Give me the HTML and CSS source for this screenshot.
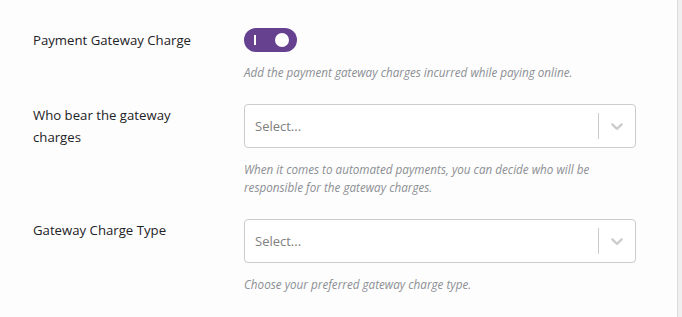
FILE: index.html
```html
<!DOCTYPE html>
<html lang="en">
<head>
<meta charset="utf-8">
<title>Gateway charges</title>
<link rel="stylesheet" href="styles.css">
</head>
<body>
<div class="page">
  <main class="settings">
    <div class="row">
      <div class="label label-toggle">Payment Gateway Charge</div>
      <div class="field">
        <div class="toggle"><span class="toggle-bar"></span><span class="toggle-knob"></span></div>
        <p class="desc desc-toggle">Add the payment gateway charges incurred while paying online.</p>
      </div>
    </div>
    <div class="row">
      <div class="label">Who bear the gateway charges</div>
      <div class="field">
        <div class="select">
          <span class="select-value">Select...</span>
          <span class="select-sep"></span>
          <span class="select-ind"><svg width="20" height="20" viewBox="0 0 20 20"><path d="M4.516 7.548c0.436-0.446 1.043-0.481 1.576 0l3.908 3.747 3.908-3.747c0.533-0.481 1.141-0.446 1.574 0 0.436 0.445 0.408 1.197 0 1.615-0.406 0.418-4.695 4.502-4.695 4.502-0.217 0.223-0.502 0.335-0.787 0.335s-0.57-0.112-0.789-0.335c0 0-4.287-4.084-4.695-4.502s-0.436-1.17 0-1.615z"/></svg></span>
        </div>
        <p class="desc">When it comes to automated payments, you can decide who will be responsible for the gateway charges.</p>
      </div>
    </div>
    <div class="row">
      <div class="label">Gateway Charge Type</div>
      <div class="field">
        <div class="select">
          <span class="select-value">Select...</span>
          <span class="select-sep"></span>
          <span class="select-ind"><svg width="20" height="20" viewBox="0 0 20 20"><path d="M4.516 7.548c0.436-0.446 1.043-0.481 1.576 0l3.908 3.747 3.908-3.747c0.533-0.481 1.141-0.446 1.574 0 0.436 0.445 0.408 1.197 0 1.615-0.406 0.418-4.695 4.502-4.695 4.502-0.217 0.223-0.502 0.335-0.787 0.335s-0.57-0.112-0.789-0.335c0 0-4.287-4.084-4.695-4.502s-0.436-1.17 0-1.615z"/></svg></span>
        </div>
        <p class="desc">Choose your preferred gateway charge type.</p>
      </div>
    </div>
  </main>
  <div class="edge"></div>
</div>
</body>
</html>
```
FILE: styles.css
```css
html, body {
  margin: 0;
  padding: 0;
}
body {
  background: #fdfdfd;
  font-family: "Open Sans", "Noto Sans", sans-serif;
  color: #1d2327;
}
.page {
  display: flex;
  min-height: 317px;
}
.settings {
  flex: 1;
  padding: 28px 0 0 33px;
  display: flex;
  flex-direction: column;
  gap: 23px;
}
.edge {
  width: 4px;
  background: #f0f0f1;
  border-left: 1px solid #dcdcde;
}
.row {
  display: grid;
  grid-template-columns: 211px 392px;
}
.label {
  font-size: 13.2px;
  line-height: 22px;
  padding-right: 40px;
}
.label-toggle {
  padding-top: 1px;
}
.field {
  display: flex;
  flex-direction: column;
}
.toggle {
  width: 53px;
  height: 24px;
  border-radius: 12px;
  background: #65418f;
  display: flex;
  align-items: center;
  justify-content: space-between;
  padding: 0 8px 0 10px;
  box-sizing: border-box;
}
.toggle-bar {
  width: 2px;
  height: 10px;
  background: #fff;
}
.toggle-knob {
  width: 14px;
  height: 14px;
  border-radius: 50%;
  background: #fff;
}
.desc {
  margin: 12px 0 0;
  font-size: 11.7px;
  line-height: 18px;
  font-style: italic;
  color: #8c8f94;
  max-width: 370px;
}
.desc-toggle {
  margin-top: 11px;
}
.select {
  height: 44px;
  box-sizing: border-box;
  border: 1px solid #cccccc;
  border-radius: 4px;
  background: #fff;
  display: flex;
  align-items: stretch;
}
.select-value {
  flex: 1;
  display: flex;
  align-items: center;
  padding-left: 10px;
  font-size: 13px;
  color: #808080;
}
.select-sep {
  width: 1px;
  background: #cccccc;
  margin: 8px 0;
}
.select-ind {
  display: flex;
  align-items: center;
  padding: 0 8px;
}
.select-ind svg {
  fill: #cccccc;
  display: block;
}
```
